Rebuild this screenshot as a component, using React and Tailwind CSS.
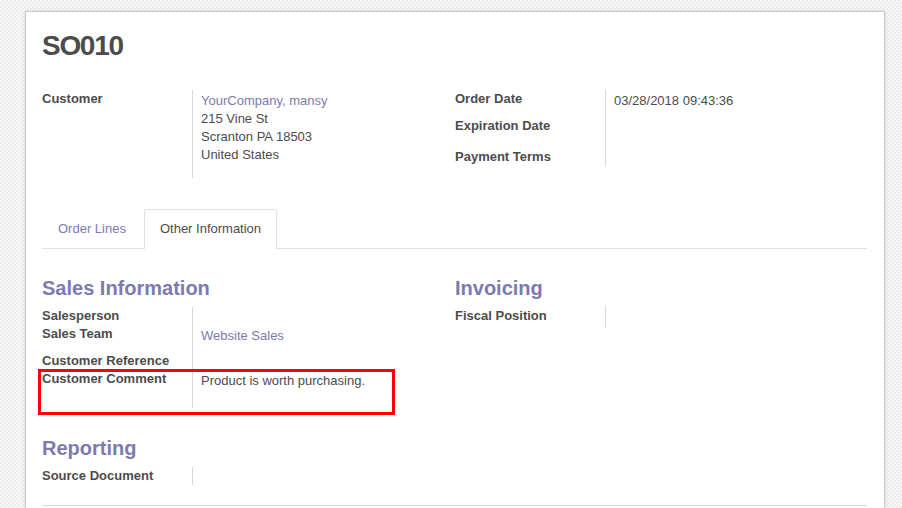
import React from "react";

const Row = ({ label, children, h, overlay }) => (
  <div className={"relative flex " + h}>
    <div className="w-[150px] shrink-0 font-bold leading-[18px]">{label}</div>
    <div className="border-l border-[#d9d9d9] pl-2 leading-[18px]">
      {children}
    </div>
    {overlay}
  </div>
);

const Heading = ({ children }) => (
  <div className="text-[20px] leading-6 font-bold text-[#7c7bad]">{children}</div>
);

const App = () => {
  return (
    <div
      className="h-[508px] w-full overflow-hidden bg-[#f4f4f4] bg-[image:repeating-conic-gradient(#ececec_0%_25%,#f9f9f9_0%_50%)] bg-[length:4px_4px] pt-[11px] pl-[25px] text-[13px] text-[#4c4c4c]"
      style={{ fontFamily: '"Liberation Sans", Arial, sans-serif' }}
    >
      <div className="w-[860px] h-[520px] border border-[#c9c9d3] bg-white shadow-[0_0_4px_rgba(0,0,0,0.12)] pl-4 pr-[17px] pt-[17px]">
        <div className="text-[28px] leading-[34px] font-bold tracking-[-1.3px]">SO010</div>

        <div className="mt-[27px] flex">
          <div className="w-[413px]">
            <Row label="Customer" h="h-[88px]">
              <div className="pt-[2px]">
                <div className="text-[#7c7bad]">YourCompany, mansy</div>
                <div>215 Vine St</div>
                <div>Scranton PA 18503</div>
                <div>United States</div>
              </div>
            </Row>
          </div>
          <div className="flex-1">
            <Row label="Order Date" h="h-[27px]">
              <div className="pt-[2px]">03/28/2018 09:43:36</div>
            </Row>
            <Row label="Expiration Date" h="h-[31px]" />
            <Row label="Payment Terms" h="h-[17px]" />
          </div>
        </div>

        <div className="mt-[31px] flex h-10 border-b border-[#dee2e6]">
          <div className="mr-[2px] px-4 leading-10 text-[#7c7bad]">Order Lines</div>
          <div className="-mb-px rounded-t-[3px] border border-b-0 border-[#dee2e6] bg-white px-[15px] leading-[37px]">
            Other Information
          </div>
        </div>

        <div className="mt-[27px] flex">
          <div className="w-[413px]">
            <Heading>Sales Information</Heading>
            <div className="mt-[7px]">
              <Row label="Salesperson" h="h-[18px]" />
              <Row label="Sales Team" h="h-[27px]">
                <div className="pt-[2px] text-[#7c7bad]">Website Sales</div>
              </Row>
              <Row label="Customer Reference" h="h-[18px]" />
              <Row
                label="Customer Comment"
                h="h-[38px]"
                overlay={
                  <div className="absolute -left-1 -top-px h-[46px] w-[357px] border-[3px] border-[#ff0000]"></div>
                }
              >
                <div className="pt-[2px]">Product is worth purchasing.</div>
              </Row>
            </div>
          </div>
          <div className="flex-1">
            <Heading>Invoicing</Heading>
            <div className="mt-[7px]">
              <Row label="Fiscal Position" h="h-[21px]" />
            </div>
          </div>
        </div>

        <div className="mt-[28px]">
          <Heading>Reporting</Heading>
          <div className="mt-[7px]">
            <Row label="Source Document" h="h-[18px]" />
          </div>
        </div>

        <div className="mt-5 border-t border-[#d9d9d9]"></div>
      </div>
    </div>
  );
};

export default App;
